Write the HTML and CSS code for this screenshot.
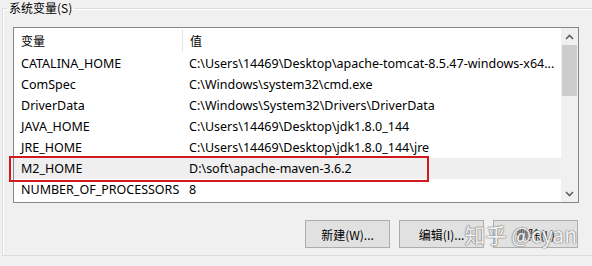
FILE: index.html
```html
<!DOCTYPE html>
<html lang="zh-CN">
<head>
    <meta charset="UTF-8">
    <title>系统变量</title>
    <link rel="stylesheet" href="styles.css">
</head>
<body>
    <fieldset class="group">
        <legend>系统变量(S)</legend>

        <div class="listview">
            <div class="list">
                <div class="row header">
                    <div class="cell name">变量</div>
                    <div class="cell value">值</div>
                </div>
                <div class="row">
                    <div class="cell name">CATALINA_HOME</div>
                    <div class="cell value">C:\Users\14469\Desktop\apache-tomcat-8.5.47-windows-x64...</div>
                </div>
                <div class="row">
                    <div class="cell name">ComSpec</div>
                    <div class="cell value">C:\Windows\system32\cmd.exe</div>
                </div>
                <div class="row">
                    <div class="cell name">DriverData</div>
                    <div class="cell value">C:\Windows\System32\Drivers\DriverData</div>
                </div>
                <div class="row">
                    <div class="cell name">JAVA_HOME</div>
                    <div class="cell value">C:\Users\14469\Desktop\jdk1.8.0_144</div>
                </div>
                <div class="row">
                    <div class="cell name">JRE_HOME</div>
                    <div class="cell value">C:\Users\14469\Desktop\jdk1.8.0_144\jre</div>
                </div>
                <div class="row selected">
                    <div class="cell name">M2_HOME</div>
                    <div class="cell value">D:\soft\apache-maven-3.6.2</div>
                    <span class="mark"></span>
                </div>
                <div class="row">
                    <div class="cell name">NUMBER_OF_PROCESSORS</div>
                    <div class="cell value">8</div>
                </div>
            </div>
            <div class="scrollbar">
                <div class="arrow">
                    <svg width="9" height="6" viewBox="0 0 9 6"><path d="M1 5 L4.5 1.5 L8 5" fill="none" stroke="#606060" stroke-width="1.6"/></svg>
                </div>
                <div class="track">
                    <div class="thumb"></div>
                </div>
                <div class="arrow">
                    <svg width="9" height="6" viewBox="0 0 9 6"><path d="M1 1 L4.5 4.5 L8 1" fill="none" stroke="#606060" stroke-width="1.6"/></svg>
                </div>
            </div>
        </div>

        <div class="buttons">
            <button>新建(W)...</button>
            <button>编辑(I)...</button>
            <button>删除(L)</button>
            <span class="watermark">知乎 @cyan</span>
        </div>
    </fieldset>
</body>
</html>
```

FILE: styles.css
```css
body {
    margin: 0;
    background: #f0f0f0;
    font-family: 'Noto Sans', 'Noto Sans CJK SC', sans-serif;
    font-size: 12.5px;
    color: #000;
    overflow: hidden;
}

.group {
    margin: 0 0 0 2px;
    padding: 0;
    height: 256px;
    border: 1px solid #dcdcdc;
    border-right: none;
    box-sizing: border-box;
    box-shadow: inset 1px 1px 0 #fff;
}

.group legend {
    margin-left: 4px;
    padding: 0 2px;
    line-height: 16px;
    font-size: 12px;
    font-family: 'Noto Sans CJK SC', sans-serif;
}

.listview {
    display: flex;
    margin: 11px 0 0 10px;
    width: 566px;
    height: 176px;
    border: 1px solid #828790;
    background: white;
    box-sizing: border-box;
}

.list {
    flex: 1;
}

.row {
    display: flex;
    height: 21px;
    align-items: center;
    position: relative;
}

.row.header {
    height: 25px;
    font-size: 12px;
    font-family: 'Noto Sans CJK SC', sans-serif;
}

.cell {
    padding-left: 7px;
    white-space: nowrap;
    box-sizing: border-box;
}

.cell.name {
    width: 168px;
}

.cell.value {
    flex: 1;
}

.header .cell.value {
    border-left: 1px solid #e5e5e5;
    height: 23px;
    line-height: 23px;
}

.row.selected {
    background: #efefef;
}

.row .mark {
    position: absolute;
    left: -5px;
    top: -2px;
    width: 420px;
    height: 26px;
    border: 2px solid #cf1a20;
    box-sizing: border-box;
}

.scrollbar {
    width: 17px;
    background: #f0f0f0;
    display: flex;
    flex-direction: column;
}

.arrow {
    height: 17px;
    display: flex;
    align-items: center;
    justify-content: center;
}

.track {
    flex: 1;
    padding: 0 1px;
}

.thumb {
    height: 51px;
    background: #cdcdcd;
}

.buttons {
    display: flex;
    justify-content: flex-end;
    gap: 9px;
    margin: 17px 14px 0 0;
    position: relative;
}

.buttons button {
    width: 85px;
    height: 28px;
    background: #e1e1e1;
    border: 1px solid #adadad;
    font-family: 'Noto Sans CJK SC', sans-serif;
    font-size: 12px;
    color: #000;
    padding: 0;
}

.watermark {
    position: absolute;
    right: 1px;
    top: 0;
    font-family: 'Noto Sans CJK SC', sans-serif;
    font-size: 21px;
    line-height: 28px;
    color: rgba(255, 255, 255, 0.92);
    text-shadow: 0 0 1px #777, 0 0 1px #777, 0 0 2px #999;
    pointer-events: none;
}
```
